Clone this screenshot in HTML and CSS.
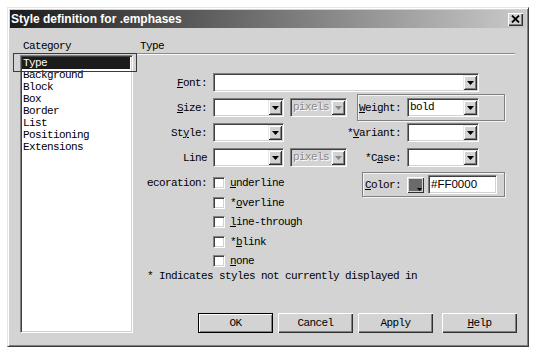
FILE: index.html
```html
<!DOCTYPE html>
<html>
<head>
<meta charset="utf-8">
<link rel="stylesheet" href="styles.css">
</head>
<body>
<div class="dialog">
  <div class="titlebar">
    <span class="title">Style definition for .emphases</span>
    <span class="close"><svg width="9" height="8" viewBox="0 0 9 8"><path d="M1 0.5 L8 7.5 M8 0.5 L1 7.5" stroke="#000" stroke-width="1.8"/></svg></span>
  </div>
  <div class="main">
    <div class="cat">
      <div class="hdr">Category</div>
      <div class="listbox">
        <div class="item sel">Type</div>
        <div class="item">Background</div>
        <div class="item">Block</div>
        <div class="item">Box</div>
        <div class="item">Border</div>
        <div class="item">List</div>
        <div class="item">Positioning</div>
        <div class="item">Extensions</div>
      </div>
    </div>
    <div class="panel">
      <div class="phdr">Type</div>
      <div class="etch"></div>
      <div class="form">
        <div class="row">
          <span class="lbl"><u>F</u>ont:</span>
          <span class="combo wide"><span class="val"></span><span class="arr"><svg width="7" height="4" viewBox="0 0 7 4"><path d="M0 0H7L3.5 4Z" fill="#000"/></svg></span></span>
        </div>
        <div class="row">
          <span class="lbl"><u>S</u>ize:</span>
          <span class="combo"><span class="val"></span><span class="arr"><svg width="7" height="4" viewBox="0 0 7 4"><path d="M0 0H7L3.5 4Z" fill="#000"/></svg></span></span>
          <span class="combo unit dis"><span class="val">pixels</span><span class="arr"><svg width="7" height="4" viewBox="0 0 7 4"><path d="M0 0H7L3.5 4Z" fill="#8a8a8a"/></svg></span></span>
          <span class="rgrp boxed">
            <span class="rlbl"><span><u>W</u>eight:</span></span>
            <span class="combo rc"><span class="val">bold</span><span class="arr"><svg width="7" height="4" viewBox="0 0 7 4"><path d="M0 0H7L3.5 4Z" fill="#000"/></svg></span></span>
          </span>
        </div>
        <div class="row">
          <span class="lbl">St<u>y</u>le:</span>
          <span class="combo"><span class="val"></span><span class="arr"><svg width="7" height="4" viewBox="0 0 7 4"><path d="M0 0H7L3.5 4Z" fill="#000"/></svg></span></span>
          <span class="rgrp">
            <span class="rlbl"><span>*<u>V</u>ariant:</span></span>
            <span class="combo rc"><span class="val"></span><span class="arr"><svg width="7" height="4" viewBox="0 0 7 4"><path d="M0 0H7L3.5 4Z" fill="#000"/></svg></span></span>
          </span>
        </div>
        <div class="row">
          <span class="lbl">Line</span>
          <span class="combo"><span class="val"></span><span class="arr"><svg width="7" height="4" viewBox="0 0 7 4"><path d="M0 0H7L3.5 4Z" fill="#000"/></svg></span></span>
          <span class="combo unit dis"><span class="val">pixels</span><span class="arr"><svg width="7" height="4" viewBox="0 0 7 4"><path d="M0 0H7L3.5 4Z" fill="#8a8a8a"/></svg></span></span>
          <span class="rgrp">
            <span class="rlbl"><span>*C<u>a</u>se:</span></span>
            <span class="combo rc"><span class="val"></span><span class="arr"><svg width="7" height="4" viewBox="0 0 7 4"><path d="M0 0H7L3.5 4Z" fill="#000"/></svg></span></span>
          </span>
        </div>
        <div class="deco">
          <div class="dlbl"><span>Decoration:</span></div>
          <div class="checks">
            <div class="chk"><span class="box"></span><span><u>u</u>nderline</span></div>
            <div class="chk"><span class="box"></span><span>*<u>o</u>verline</span></div>
            <div class="chk"><span class="box"></span><span><u>l</u>ine-through</span></div>
            <div class="chk"><span class="box"></span><span>*<u>b</u>link</span></div>
            <div class="chk"><span class="box"></span><span><u>n</u>one</span></div>
          </div>
          <div class="cgrp">
            <span class="clbl"><u>C</u>olor:</span>
            <span class="swatch"><span class="fill"></span><svg class="sarr" width="5" height="3" viewBox="0 0 5 3"><path d="M0 0H5L2.5 3Z" fill="#000"/></svg></span>
            <span class="hex">#FF0000</span>
          </div>
        </div>
        <div class="note">* Indicates styles not currently displayed in</div>
      </div>
      <div class="buttons">
        <span class="btn def">OK</span>
        <span class="btn b2">Cancel</span>
        <span class="btn b3">Apply</span>
        <span class="btn b4"><u>H</u>elp</span>
      </div>
    </div>
  </div>
</div>
</body>
</html>
```

FILE: styles.css
```css
body {
  margin: 0;
  background: #fff;
  font-family: "Liberation Mono", "DejaVu Sans Mono", monospace;
  font-size: 11px;
  letter-spacing: -0.6px;
  line-height: 12px;
  color: #000;
}
u { text-decoration: underline; text-underline-offset: 1px; }

.dialog {
  margin: 7px 0 0 7px;
  width: 522px;
  height: 340px;
  box-sizing: border-box;
  background: #d3d3d3;
  border: 1px solid;
  border-color: #e6e6e6 #3c3c3c #3c3c3c #e6e6e6;
  box-shadow: inset 1px 1px #fff, inset -1px -1px #808080;
  padding: 2px;
  display: flex;
  flex-direction: column;
}

.titlebar {
  height: 18px;
  flex: none;
  display: flex;
  align-items: center;
  padding: 0 3px 0 1px;
  background: linear-gradient(to right, #1c1c1c, #cacaca);
  color: #fff;
  letter-spacing: 0;
  font: bold 12px/18px "Liberation Sans", Arial, sans-serif;
}
.close {
  margin-left: auto;
  width: 15px;
  height: 13px;
  box-sizing: border-box;
  background: #d3d3d3;
  box-shadow: inset 1px 1px #fff, inset -1px -1px #303030, inset -2px -2px #808080;
  display: flex;
  align-items: center;
  justify-content: center;
}
.close svg { display: block; }

.main {
  flex: 1;
  display: flex;
  min-height: 0;
}

.cat {
  width: 128px;
  flex: none;
  box-sizing: border-box;
  padding: 12px 0 11px 10px;
  display: flex;
  flex-direction: column;
}
.hdr { padding-left: 3px; height: 12px; }
.listbox {
  margin-top: 3px;
  width: 113px;
  flex: 1;
  box-sizing: border-box;
  background: #fff;
  border: 1px solid;
  border-color: #808080 #fff #fff #808080;
  box-shadow: inset 1px 1px #404040, inset -1px -1px #d3d3d3;
  padding: 1px 2px 1px 1px;
}
.item { padding-left: 1px; height: 12px; white-space: nowrap; }
.item.sel {
  background: #1c1c1c;
  color: #fff;
  position: relative;
}
.item.sel::after {
  content: "";
  position: absolute;
  left: -9px;
  right: -7px;
  top: -4px;
  bottom: -3px;
  border: 1px solid #3a3a3a;
}

.panel {
  flex: 1;
  box-sizing: border-box;
  padding: 12px 9px 11px 0;
  display: flex;
  flex-direction: column;
}
.phdr { padding-left: 2px; height: 12px; }
.etch {
  margin: 1px 2px 0 -1px;
  border-top: 1px solid #8a8a8a;
  border-bottom: 1px solid #fbfbfb;
  height: 0;
}
.form { margin-top: 15px; }

.row {
  height: 25px;
  display: flex;
  align-items: center;
  padding-right: 12px;
}
.lbl {
  width: 75px;
  box-sizing: border-box;
  text-align: right;
  padding-right: 6px;
  white-space: nowrap;
  flex: none;
}

.combo {
  width: 71px;
  height: 19px;
  flex: none;
  box-sizing: border-box;
  display: flex;
  background: #fff;
  border: 1px solid;
  border-color: #808080 #fff #fff #808080;
  box-shadow: inset 1px 1px #404040, inset -1px -1px #d3d3d3;
  padding: 1px;
}
.combo.wide { width: 266px; }
.combo.unit { width: 57px; margin-left: 6px; }
.combo.rc { width: 72px; }
.combo .val {
  flex: 1;
  padding-left: 1px;
  line-height: 15px;
  white-space: nowrap;
  overflow: hidden;
}
.combo .arr {
  width: 14px;
  height: 15px;
  flex: none;
  box-sizing: border-box;
  background: #d3d3d3;
  box-shadow: inset 1px 1px #e9e9e9, inset -1px -1px #303030, inset 2px 2px #fff, inset -2px -2px #808080;
  display: flex;
  align-items: center;
  justify-content: center;
}
.combo .arr svg { display: block; margin-top: 1px; }
.combo.dis { background: #d3d3d3; }
.combo.dis .val { color: #8a8a8a; text-shadow: 1px 1px 0 #fff; }

.rgrp {
  margin-left: auto;
  width: 148px;
  height: 27px;
  flex: none;
  box-sizing: border-box;
  border: 1px solid transparent;
  display: flex;
  align-items: center;
}
.rgrp.boxed {
  border-color: #808080;
  box-shadow: 1px 1px 0 #f4f4f4, inset 1px 1px 0 #f4f4f4;
}
.rlbl {
  width: 43px;
  flex: none;
  display: flex;
  justify-content: flex-end;
  margin-right: 6px;
}
.rlbl > span { flex: none; white-space: nowrap; }

.deco {
  display: flex;
  margin-top: 2px;
}
.dlbl {
  width: 66px;
  margin-left: 9px;
  padding-right: 6px;
  box-sizing: border-box;
  flex: none;
  overflow: hidden;
  display: flex;
  justify-content: flex-end;
  padding-top: 5px;
  height: 17px;
}
.dlbl span { flex: none; white-space: nowrap; }
.checks {
  width: 149px;
  flex: none;
  padding-top: 5px;
}
.chk {
  display: flex;
  align-items: center;
  height: 12px;
  white-space: nowrap;
}
.chk + .chk { margin-top: 7.5px; }
.box {
  width: 12px;
  height: 12px;
  box-sizing: border-box;
  flex: none;
  background: #fff;
  border: 1px solid;
  border-color: #808080 #fff #fff #808080;
  box-shadow: inset 1px 1px #404040, inset -1px -1px #d3d3d3;
  margin-right: 5px;
}

.cgrp {
  width: 143px;
  height: 25px;
  flex: none;
  box-sizing: border-box;
  border: 1px solid #808080;
  box-shadow: 1px 1px 0 #f4f4f4, inset 1px 1px 0 #f4f4f4;
  display: flex;
  align-items: center;
}
.clbl {
  width: 38px;
  flex: none;
  text-align: right;
  white-space: nowrap;
  margin-right: 6px;
}
.swatch {
  position: relative;
  width: 17px;
  height: 16px;
  flex: none;
  box-sizing: border-box;
  background: #d3d3d3;
  box-shadow: inset 1px 1px #fff, inset -1px -1px #303030;
  padding: 2px;
}
.swatch .fill {
  display: block;
  width: 100%;
  height: 100%;
  background: #6a6a6a;
}
.swatch .sarr {
  position: absolute;
  right: 2px;
  bottom: 2px;
  display: block;
}
.hex {
  margin-left: 4px;
  width: 69px;
  height: 19px;
  flex: none;
  box-sizing: border-box;
  background: #fff;
  border: 1px solid;
  border-color: #808080 #fff #fff #808080;
  box-shadow: inset 1px 1px #404040, inset -1px -1px #d3d3d3;
  padding-left: 2px;
  letter-spacing: 0;
  font: 11.5px/17px "Liberation Sans", Arial, sans-serif;
}

.note {
  margin: 3px 0 0 9px;
  white-space: nowrap;
}

.buttons {
  margin-top: auto;
  display: flex;
  justify-content: flex-end;
}
.btn {
  width: 75px;
  height: 20px;
  box-sizing: border-box;
  flex: none;
  background: #d3d3d3;
  box-shadow: inset 1px 1px #fff, inset -1px -1px #303030, inset -2px -2px #808080;
  display: flex;
  align-items: center;
  justify-content: center;
}
.btn.def {
  border: 1px solid #000;
  box-shadow: inset 1px 1px #fff, inset -1px -1px #808080;
}
.b2, .b3 { margin-left: 5px; }
.b4 { margin-left: 9px; }
```
